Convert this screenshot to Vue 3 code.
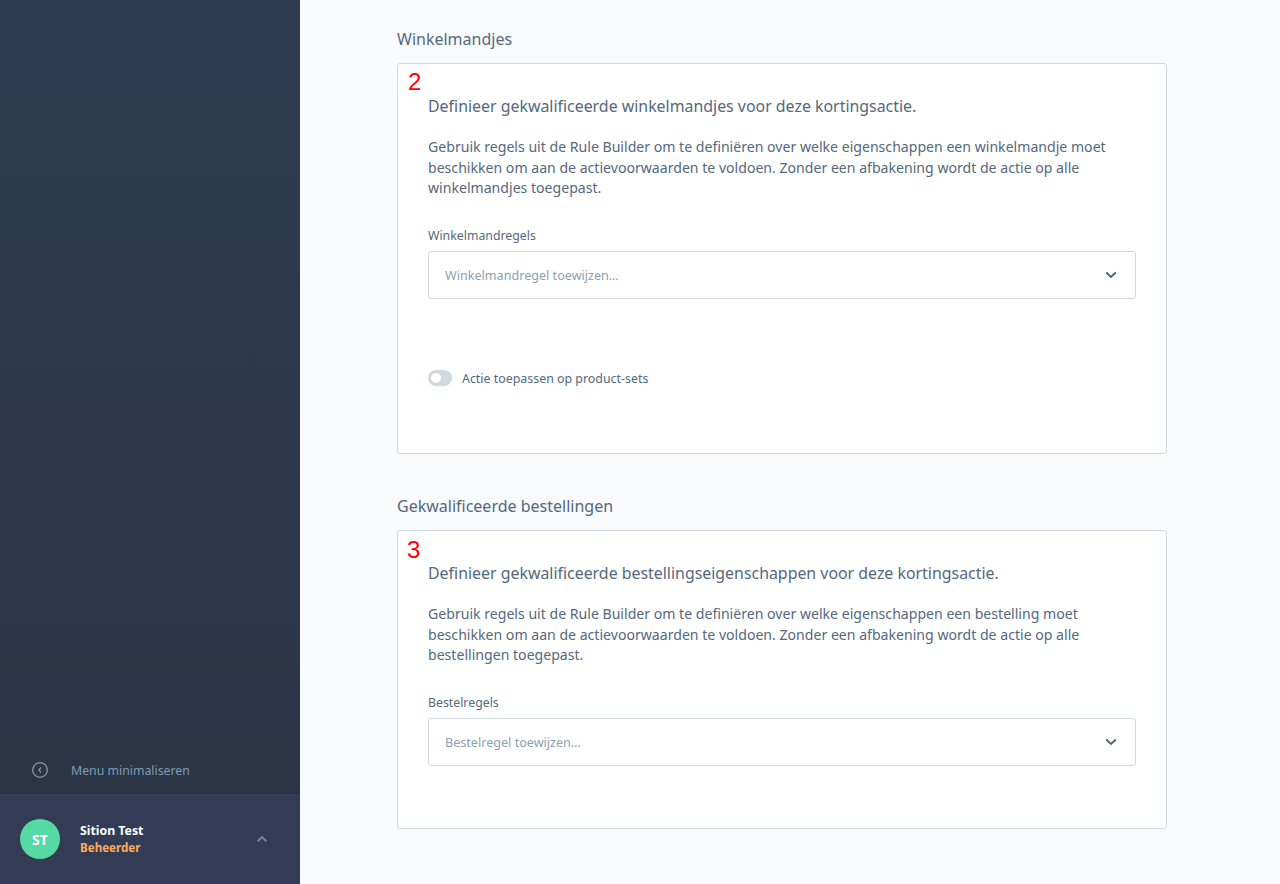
<script setup>
const cards = [
  {
    id: 2,
    heading: 'Winkelmandjes',
    title: 'Definieer gekwalificeerde winkelmandjes voor deze kortingsactie.',
    text: 'Gebruik regels uit de Rule Builder om te definiëren over welke eigenschappen een winkelmandje moet beschikken om aan de actievoorwaarden te voldoen. Zonder een afbakening wordt de actie op alle winkelmandjes toegepast.',
    label: 'Winkelmandregels',
    placeholder: 'Winkelmandregel toewijzen…',
    toggle: 'Actie toepassen op product-sets',
  },
  {
    id: 3,
    heading: 'Gekwalificeerde bestellingen',
    title: 'Definieer gekwalificeerde bestellingseigenschappen voor deze kortingsactie.',
    text: 'Gebruik regels uit de Rule Builder om te definiëren over welke eigenschappen een bestelling moet beschikken om aan de actievoorwaarden te voldoen. Zonder een afbakening wordt de actie op alle bestellingen toegepast.',
    label: 'Bestelregels',
    placeholder: 'Bestelregel toewijzen…',
  },
]
</script>

<template>
  <div class="page">
    <aside class="sidebar">
      <div class="collapse">
        <svg class="collapse-icon" width="16" height="16" viewBox="0 0 16 16" fill="none">
          <circle cx="8" cy="8" r="7.3" stroke="#8a9aaa" stroke-width="1.3" />
          <path d="M9 5.4 L7 8 L9 10.6" stroke="#8a9aaa" stroke-width="1.3" />
        </svg>
        <span>Menu minimaliseren</span>
      </div>
      <div class="user">
        <div class="avatar">ST</div>
        <div class="user-info">
          <div class="user-name">Sition Test</div>
          <div class="user-role">Beheerder</div>
        </div>
        <svg class="user-arrow" width="12" height="8" viewBox="0 0 12 8" fill="none">
          <path d="M1.5 6.2 L6 2 L10.5 6.2" stroke="#76879a" stroke-width="2" />
        </svg>
      </div>
    </aside>

    <main class="main">
      <section v-for="card in cards" :key="card.id" class="section" :class="'section-' + card.id">
        <h2 class="heading">{{ card.heading }}</h2>
        <div class="card">
          <span class="number">{{ card.id }}</span>
          <h3 class="card-title">{{ card.title }}</h3>
          <p class="card-text">{{ card.text }}</p>
          <label class="field-label">{{ card.label }}</label>
          <div class="select">
            <span>{{ card.placeholder }}</span>
            <svg width="12" height="8" viewBox="0 0 12 8" fill="none">
              <path d="M1.2 1.6 L6 6 L10.8 1.6" stroke="#52667a" stroke-width="2" />
            </svg>
          </div>
          <div v-if="card.toggle" class="toggle-row">
            <span class="toggle"><i></i></span>
            <span class="toggle-text">{{ card.toggle }}</span>
          </div>
        </div>
      </section>
    </main>
  </div>
</template>

<style scoped>
.page {
  display: flex;
  height: 884px;
  overflow: hidden;
  font-family: "Noto Sans", "Open Sans", sans-serif;
  color: #55687c;
  background: #f9fafb;
}
.sidebar {
  width: 300px;
  flex-shrink: 0;
  display: flex;
  flex-direction: column;
  justify-content: flex-end;
  background: linear-gradient(#2d3c50, #2b3445);
}
.collapse {
  height: 48px;
  display: flex;
  align-items: center;
  padding-left: 32px;
  font-size: 12.3px;
  color: #7f9cb5;
}
.collapse-icon {
  margin-right: 23px;
}
.user {
  height: 90px;
  display: flex;
  align-items: center;
  padding: 0 32px 0 20px;
  background: #323d55;
}
.avatar {
  width: 40px;
  height: 40px;
  border-radius: 50%;
  background: #57d9a3;
  color: #fff;
  display: flex;
  align-items: center;
  justify-content: center;
  font-size: 14px;
  font-weight: 700;
}
.user-info {
  flex: 1;
  margin-left: 20px;
  font-size: 12.3px;
  font-weight: 700;
  line-height: 17px;
}
.user-name {
  color: #fff;
}
.user-role {
  color: #ffab5e;
  font-size: 11.6px;
}
.main {
  flex: 1;
  padding: 29px 0 0 97px;
}
.section-3 {
  margin-top: 42px;
}
.heading {
  margin: 0 0 14px;
  font-size: 16px;
  line-height: 20px;
  font-weight: 400;
}
.card {
  position: relative;
  width: 770px;
  box-sizing: border-box;
  padding: 32px 30px 0;
  background: #fff;
  border: 1px solid #d1d9e0;
  border-radius: 3px;
}
.section-2 .card {
  height: 391px;
}
.section-3 .card {
  height: 299px;
}
.number {
  position: absolute;
  left: 10px;
  top: 4px;
  font-family: "Liberation Sans", sans-serif;
  font-size: 24px;
  line-height: 28px;
  color: #f00;
}
.section-3 .number {
  left: 9px;
  top: 5px;
}
.card-title {
  margin: 0;
  font-size: 15.9px;
  line-height: 20px;
  font-weight: 400;
}
.card-text {
  margin: 21px 0 0;
  font-size: 14.1px;
  line-height: 20.5px;
}
.field-label {
  display: block;
  margin-top: 29px;
  font-size: 12.3px;
  line-height: 16px;
}
.select {
  height: 48px;
  box-sizing: border-box;
  margin-top: 7px;
  padding: 0 18px 0 16px;
  display: flex;
  align-items: center;
  justify-content: space-between;
  border: 1px solid #d1d9e0;
  border-radius: 3px;
  font-size: 12.6px;
  color: #8d9fb0;
}
.select span {
  padding-top: 1px;
}
.toggle-row {
  margin-top: 71px;
  display: flex;
  align-items: center;
  gap: 10px;
  font-size: 12.4px;
  line-height: 16px;
}
.toggle-text {
  padding-top: 1px;
}
.toggle {
  width: 24px;
  height: 16px;
  border-radius: 8px;
  background: #d1d9e0;
  position: relative;
}
.toggle i {
  position: absolute;
  left: 3px;
  top: 3px;
  width: 10px;
  height: 10px;
  border-radius: 50%;
  background: #fff;
}
</style>
